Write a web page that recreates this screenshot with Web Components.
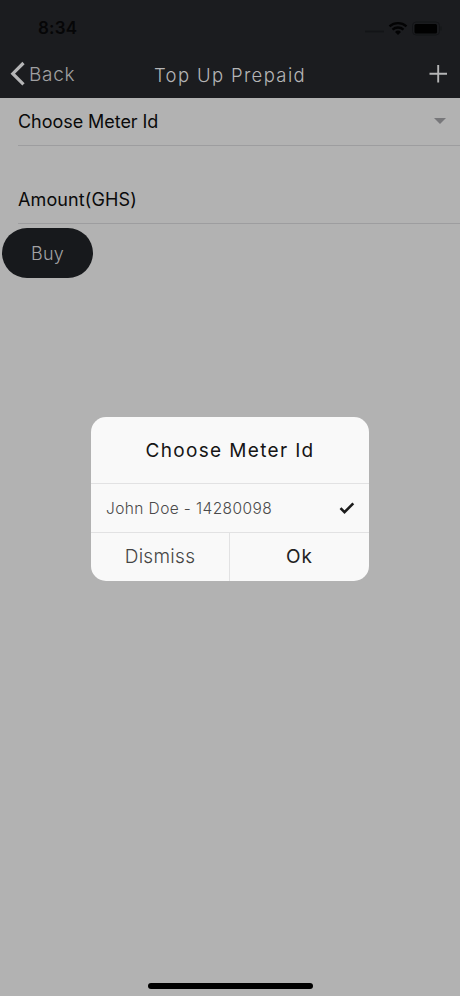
<!DOCTYPE html>
<html lang="en">
<head>
<meta charset="utf-8">
<meta name="viewport" content="width=device-width, initial-scale=1">
<title>Top Up Prepaid</title>
<style>
    body {
        margin: 0;
        background-color: #b2b2b2;
    }
</style>
</head>
<body>
<top-up-page></top-up-page>

<script>
function makeTemplate(html) {
	const template = document.createElement("template");
	template.innerHTML = html;
	return template;
}

class BaseElement extends HTMLElement {
	constructor() {
		super();

		this.attachShadow({ mode: "open" });
		this.shadowRoot.append(this.constructor.template.content.cloneNode(true));
	}
}

class StatusBar extends BaseElement {}

StatusBar.template = makeTemplate(`
<style>
    :host {
        display: flex;
        box-sizing: border-box;
        height: 50px;
        padding: 5px 18px 0 38px;
        align-items: center;
        justify-content: space-between;
        color: #060607;
        font: 600 17px/22px Inter, sans-serif;
    }

    .time {
        letter-spacing: 0.2px;
    }

    .icons {
        display: flex;
        align-items: center;
    }
</style>

<div class="time"><slot></slot></div>
<div class="icons">
    <svg width="80" height="18" viewBox="0 0 80 18">
        <path d="M3 12.5h19" stroke="#131417" stroke-width="1.6" />
        <g fill="none" stroke="#030304" stroke-width="2.3">
            <path d="M27.5 7.3a13 13 0 0 1 17 0" />
            <path d="M30.5 10.6a8.2 8.2 0 0 1 11 0" />
        </g>
        <path d="M33 12.9a4.6 4.6 0 0 1 6 0l-3 3z" fill="#030304" />
        <rect x="50.5" y="3" width="27" height="13" rx="3.5" fill="none" stroke="#131417" />
        <rect x="52.5" y="5" width="22.5" height="9.5" rx="1.5" fill="#010101" />
        <path d="M79 7.5v4" stroke="#131417" />
    </svg>
</div>
`);

class NavBar extends BaseElement {}

NavBar.template = makeTemplate(`
<style>
    :host {
        display: grid;
        grid-template-columns: 1fr auto 1fr;
        align-items: center;
        height: 48px;
        color: #b5b5b6;
        font: 300 19px/24px Inter, sans-serif;
    }

    .back {
        display: flex;
        align-items: center;
        padding-left: 10px;
        gap: 4px;
        color: #a0a0a2;
        font-size: 19px;
        letter-spacing: 0.7px;
    }

    .back span, .title {
        padding-top: 1px;
    }

    .title {
        font-size: 18.5px;
        letter-spacing: 1.35px;
        white-space: nowrap;
    }

    .add {
        display: flex;
        justify-content: flex-end;
        padding-right: 12px;
    }
</style>

<div class="back">
    <svg width="15" height="26" viewBox="0 0 15 26">
        <path d="M13.5 2L2.8 12.7l10.7 10.7" fill="none" stroke="#b5b5b6" stroke-width="3.2" />
    </svg>
    <span>Back</span>
</div>
<div class="title"><slot></slot></div>
<div class="add">
    <svg width="20" height="20" viewBox="0 0 20 20">
        <path d="M1.5 9.8h17.5M10.2 1v17.6" stroke="#b5b5b6" stroke-width="1.9" />
    </svg>
</div>
`);

class FormRow extends BaseElement {}

FormRow.template = makeTemplate(`
<style>
    :host {
        display: flex;
        box-sizing: border-box;
        align-items: flex-end;
        justify-content: space-between;
        height: 48px;
        margin-left: 18px;
        padding: 0 14px 11px 0;
        border-bottom: 1px solid #9d9d9f;
        color: #0a0a0a;
        font: 400 18px/24px Inter, sans-serif;
        letter-spacing: -0.05px;
    }

    :host(.amount) {
        letter-spacing: 0.12px;
    }

    .arrow {
        display: none;
        margin-bottom: 10px;
        border: 6px solid transparent;
        border-top-color: #77777a;
        border-bottom: 0;
    }

    :host([select]) .arrow {
        display: block;
    }
</style>

<slot></slot>
<span class="arrow"></span>
`);

class RoundButton extends BaseElement {}

RoundButton.template = makeTemplate(`
<style>
    :host {
        display: block;
        width: 91px;
        height: 50px;
        margin: 4px 2px;
    }

    button {
        width: 100%;
        height: 100%;
        padding: 2px 0 0;
        border: 0;
        border-radius: 25px;
        background-color: #17191c;
        color: #a2a2a4;
        font: 300 18px/24px Inter, sans-serif;
        letter-spacing: 0.2px;
    }
</style>

<button><slot></slot></button>
`);

class ChoiceDialog extends BaseElement {}

ChoiceDialog.template = makeTemplate(`
<style>
    :host {
        display: block;
        width: 278px;
        height: 164px;
        border-radius: 15px;
        overflow: hidden;
        background-color: #f9f9f9;
        color: #151515;
        font-family: Inter, sans-serif;
    }

    h2 {
        box-sizing: border-box;
        height: 67px;
        margin: 0;
        padding-top: 1px;
        border-bottom: 1px solid #e2e2e3;
        text-align: center;
        font-size: 19px;
        font-weight: 400;
        line-height: 65px;
        letter-spacing: 1.35px;
    }

    .option {
        display: flex;
        box-sizing: border-box;
        height: 49px;
        padding: 0 14px 0 15px;
        align-items: center;
        justify-content: space-between;
        border-bottom: 1px solid #e2e2e3;
        color: #4a4a4a;
        font-size: 15.5px;
        font-weight: 300;
        letter-spacing: 0.4px;
    }

    .actions {
        display: grid;
        grid-template-columns: 139px 1fr;
        height: 48px;
        text-align: center;
        font-size: 19px;
        line-height: 48px;
        letter-spacing: 0.3px;
    }

    .dismiss {
        box-sizing: border-box;
        border-right: 1px solid #e2e2e3;
        color: #454545;
        font-weight: 300;
    }

    .ok {
        color: #222;
        letter-spacing: 1px;
    }
</style>

<h2><slot name="title"></slot></h2>
<div class="option">
    <slot></slot>
    <svg width="16" height="14" viewBox="0 0 16 14">
        <path d="M1.5 7.2l4 4L14.3 2.3" fill="none" stroke="#1c1c1c" stroke-width="2.6" />
    </svg>
</div>
<div class="actions">
    <div class="dismiss">Dismiss</div>
    <div class="ok">Ok</div>
</div>
`);

class TopUpPage extends BaseElement {}

TopUpPage.template = makeTemplate(`
<style>
    :host {
        display: flex;
        position: relative;
        flex-flow: column;
        width: 460px;
        height: 996px;
        overflow: hidden;
        background-color: #b2b2b2;
    }

    header {
        height: 98px;
        background-color: #1b1c1f;
    }

    main {
        flex: 1;
    }

    .amount {
        height: 78px;
    }

    .overlay {
        display: flex;
        position: absolute;
        inset: 0;
        align-items: center;
        justify-content: center;
        padding-top: 2px;
    }

    .home {
        width: 165px;
        height: 6px;
        margin: 0 auto 7px 148px;
        border-radius: 3px;
        background-color: #000;
    }
</style>

<header>
    <status-bar>8:34</status-bar>
    <nav-bar>Top Up Prepaid</nav-bar>
</header>
<main>
    <form-row select>Choose Meter Id</form-row>
    <form-row class="amount">Amount(GHS)</form-row>
    <round-button>Buy</round-button>
</main>
<div class="home"></div>
<div class="overlay">
    <choice-dialog>
        <span slot="title">Choose Meter Id</span>
        John Doe - 14280098
    </choice-dialog>
</div>
`);

customElements.define("status-bar", StatusBar);
customElements.define("nav-bar", NavBar);
customElements.define("form-row", FormRow);
customElements.define("round-button", RoundButton);
customElements.define("choice-dialog", ChoiceDialog);
customElements.define("top-up-page", TopUpPage);
</script>
</body>
</html>
